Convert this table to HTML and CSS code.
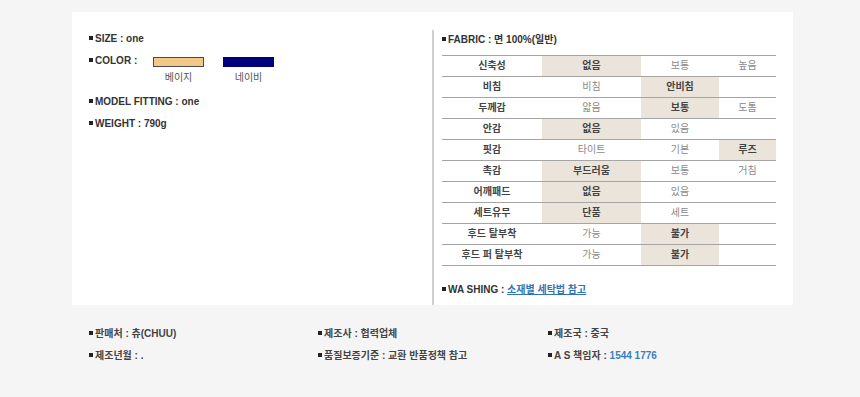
FILE: index.html
```html
<!DOCTYPE html>
<html lang="ko">
<head>
<meta charset="utf-8">
<title>상품 정보</title>
<link rel="stylesheet" href="styles.css">
</head>
<body>
<div class="panel">
  <div class="spec-left">
    <p class="spec"><span class="bullet"></span>SIZE : one</p>
    <div class="color-row">
      <p class="spec color-title"><span class="bullet"></span>COLOR :</p>
      <div class="swatches">
        <div class="swatch-item"><span class="swatch beige"></span><span class="swatch-label">베이지</span></div>
        <div class="swatch-item"><span class="swatch navy"></span><span class="swatch-label">네이비</span></div>
      </div>
    </div>
    <p class="spec"><span class="bullet"></span>MODEL FITTING : one</p>
    <p class="spec"><span class="bullet"></span>WEIGHT : 790g</p>
  </div>
  <div class="spec-right">
    <p class="spec"><span class="bullet"></span>FABRIC : 면 100%(일반)</p>
    <table class="fabric-table">
      <colgroup><col class="c1"><col class="c2"><col class="c3"><col class="c4"></colgroup>
      <tr><th>신축성</th><td class="on">없음</td><td>보통</td><td>높음</td></tr>
      <tr><th>비침</th><td>비침</td><td class="on">안비침</td><td></td></tr>
      <tr><th>두께감</th><td>얇음</td><td class="on">보통</td><td>도톰</td></tr>
      <tr><th>안감</th><td class="on">없음</td><td>있음</td><td></td></tr>
      <tr><th>핏감</th><td>타이트</td><td>기본</td><td class="on">루즈</td></tr>
      <tr><th>촉감</th><td class="on">부드러움</td><td>보통</td><td>거침</td></tr>
      <tr><th>어깨패드</th><td class="on">없음</td><td>있음</td><td></td></tr>
      <tr><th>세트유무</th><td class="on">단품</td><td>세트</td><td></td></tr>
      <tr><th>후드 탈부착</th><td>가능</td><td class="on">불가</td><td></td></tr>
      <tr><th>후드 퍼 탈부착</th><td>가능</td><td class="on">불가</td><td></td></tr>
    </table>
    <p class="spec washing"><span class="bullet"></span>WA SHING : <a class="link" href="#">소재별 세탁법 참고</a></p>
  </div>
</div>
<div class="footer-info">
  <p class="info"><span class="bullet"></span>판매처 : 츄(CHUU)</p>
  <p class="info"><span class="bullet"></span>제조사 : 협력업체</p>
  <p class="info"><span class="bullet"></span>제조국 : 중국</p>
  <p class="info"><span class="bullet"></span>제조년월 : .</p>
  <p class="info"><span class="bullet"></span>품질보증기준 : 교환 반품정책 참고</p>
  <p class="info"><span class="bullet"></span>A S 책임자 : <span class="tel">1544 1776</span></p>
</div>
</body>
</html>
```
FILE: styles.css
```css
* { box-sizing: border-box; }
body {
  margin: 0;
  background: #f5f5f5;
  font-family: "Liberation Sans", "Noto Sans CJK KR", sans-serif;
  font-size: 10px;
  color: #333;
}
p { margin: 0; }
.panel {
  margin: 12px 0 0 72px;
  width: 721px;
  height: 293px;
  background: #fff;
  display: flex;
}
.bullet {
  display: inline-block;
  width: 4px;
  height: 4px;
  background: #222;
  margin-right: 2px;
  vertical-align: 2px;
}
.spec {
  font-weight: bold;
  line-height: 12px;
  color: #333;
  white-space: nowrap;
}
.spec-left {
  width: 360px;
  padding: 21px 0 0 17px;
  display: flex;
  flex-direction: column;
  gap: 10px;
}
.color-row {
  display: flex;
  align-items: flex-start;
  margin-bottom: 2px;
}
.color-title { width: 64px; }
.swatches {
  display: flex;
  gap: 19px;
  padding-top: 2px;
}
.swatch-item {
  display: flex;
  flex-direction: column;
  align-items: center;
  width: 51px;
  gap: 5px;
}
.swatch {
  display: block;
  width: 51px;
  height: 10px;
}
.beige { background: #f2c987; border: 1px solid #4a4a4a; }
.navy { background: #00007f; }
.swatch-label {
  font-size: 10px;
  line-height: 12px;
  color: #555;
}
.spec-right {
  flex: 1;
  margin-top: 18px;
  border-left: 2px solid #cfcfcf;
  padding: 4px 0 0 8px;
}
.fabric-table {
  margin-top: 9px;
  width: 334px;
  border-collapse: collapse;
  border-top: 1px solid #a5a5a5;
  table-layout: fixed;
}
.c1 { width: 100px; }
.c2 { width: 99px; }
.c3 { width: 78px; }
.c4 { width: 57px; }
.fabric-table th,
.fabric-table td {
  height: 21px;
  padding: 0;
  text-align: center;
  border-bottom: 1px solid #a5a5a5;
  font-size: 10px;
  line-height: 12px;
}
.fabric-table th { font-weight: bold; color: #444; }
.fabric-table td { font-weight: normal; color: #8a8a8a; }
.fabric-table td.on {
  background: #ebe4da;
  font-weight: bold;
  color: #444;
}
.washing { margin-top: 18px; }
.link { color: #2f74b5; text-decoration: underline; }
.footer-info {
  margin: 23px 0 0 89px;
  display: grid;
  grid-template-columns: 229px 230px 200px;
  row-gap: 10px;
}
.info {
  font-weight: bold;
  line-height: 12px;
  color: #444;
  white-space: nowrap;
}
.tel { color: #3a7fc0; }
```
